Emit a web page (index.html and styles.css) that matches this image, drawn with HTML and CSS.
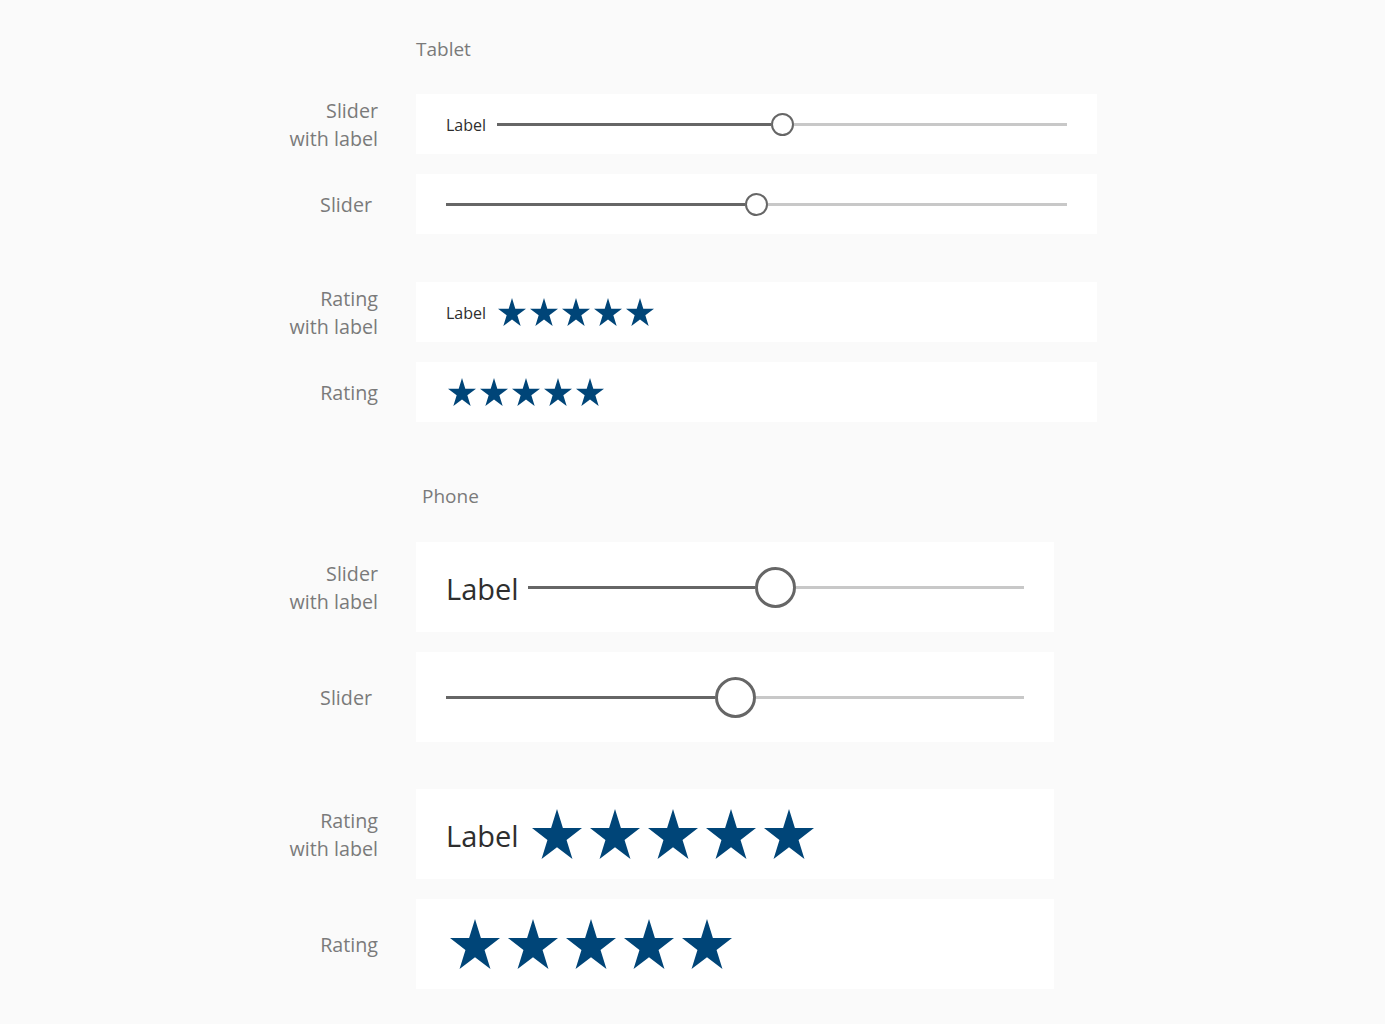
FILE: index.html
```html
<!DOCTYPE html>
<html lang="en">
<head>
<meta charset="utf-8">
<title>Slider and Rating</title>
<link rel="stylesheet" href="styles.css">
</head>
<body>
<svg width="0" height="0" class="defs" aria-hidden="true">
  <defs>
    <polygon id="star" points="50,0 61.8,38.2 100,38.2 69.1,61.8 80.9,100 50,76.4 19.1,100 30.9,61.8 0,38.2 38.2,38.2"/>
  </defs>
</svg>
<main class="page">
  <section class="section tablet">
    <h2 class="heading">Tablet</h2>
    <div class="cluster">
      <div class="row">
        <div class="row-label">Slider<br>with label</div>
        <div class="card">
          <span class="ctl-label">Label</span>
          <div class="slider">
            <span class="track filled"></span>
            <span class="thumb"></span>
            <span class="track empty"></span>
          </div>
        </div>
      </div>
      <div class="row">
        <div class="row-label shifted">Slider</div>
        <div class="card">
          <div class="slider">
            <span class="track filled"></span>
            <span class="thumb"></span>
            <span class="track empty"></span>
          </div>
        </div>
      </div>
    </div>
    <div class="cluster">
      <div class="row">
        <div class="row-label">Rating<br>with label</div>
        <div class="card">
          <span class="ctl-label">Label</span>
          <div class="stars">
            <svg class="star" viewBox="0 0 100 100"><use href="#star"/></svg>
            <svg class="star" viewBox="0 0 100 100"><use href="#star"/></svg>
            <svg class="star" viewBox="0 0 100 100"><use href="#star"/></svg>
            <svg class="star" viewBox="0 0 100 100"><use href="#star"/></svg>
            <svg class="star" viewBox="0 0 100 100"><use href="#star"/></svg>
          </div>
        </div>
      </div>
      <div class="row">
        <div class="row-label">Rating</div>
        <div class="card">
          <div class="stars">
            <svg class="star" viewBox="0 0 100 100"><use href="#star"/></svg>
            <svg class="star" viewBox="0 0 100 100"><use href="#star"/></svg>
            <svg class="star" viewBox="0 0 100 100"><use href="#star"/></svg>
            <svg class="star" viewBox="0 0 100 100"><use href="#star"/></svg>
            <svg class="star" viewBox="0 0 100 100"><use href="#star"/></svg>
          </div>
        </div>
      </div>
    </div>
  </section>

  <section class="section phone">
    <h2 class="heading">Phone</h2>
    <div class="cluster">
      <div class="row">
        <div class="row-label">Slider<br>with label</div>
        <div class="card">
          <span class="ctl-label">Label</span>
          <div class="slider">
            <span class="track filled"></span>
            <span class="thumb"></span>
            <span class="track empty"></span>
          </div>
        </div>
      </div>
      <div class="row">
        <div class="row-label shifted">Slider</div>
        <div class="card">
          <div class="slider">
            <span class="track filled"></span>
            <span class="thumb"></span>
            <span class="track empty"></span>
          </div>
        </div>
      </div>
    </div>
    <div class="cluster">
      <div class="row">
        <div class="row-label">Rating<br>with label</div>
        <div class="card">
          <span class="ctl-label">Label</span>
          <div class="stars">
            <svg class="star" viewBox="0 0 100 100"><use href="#star"/></svg>
            <svg class="star" viewBox="0 0 100 100"><use href="#star"/></svg>
            <svg class="star" viewBox="0 0 100 100"><use href="#star"/></svg>
            <svg class="star" viewBox="0 0 100 100"><use href="#star"/></svg>
            <svg class="star" viewBox="0 0 100 100"><use href="#star"/></svg>
          </div>
        </div>
      </div>
      <div class="row">
        <div class="row-label">Rating</div>
        <div class="card">
          <div class="stars">
            <svg class="star" viewBox="0 0 100 100"><use href="#star"/></svg>
            <svg class="star" viewBox="0 0 100 100"><use href="#star"/></svg>
            <svg class="star" viewBox="0 0 100 100"><use href="#star"/></svg>
            <svg class="star" viewBox="0 0 100 100"><use href="#star"/></svg>
            <svg class="star" viewBox="0 0 100 100"><use href="#star"/></svg>
          </div>
        </div>
      </div>
    </div>
  </section>
</main>
</body>
</html>
```

FILE: styles.css
```css
* { box-sizing: border-box; }

html, body {
  margin: 0;
  padding: 0;
  background: #fafafa;
}

body {
  font-family: "Open Sans", "Noto Sans", "Liberation Sans", sans-serif;
  color: #333;
}

.defs { position: absolute; width: 0; height: 0; overflow: hidden; }

.page {
  padding-top: 35px;
  display: flex;
  flex-direction: column;
}

.section {
  display: flex;
  flex-direction: column;
  gap: 48px;
}

.phone {
  margin-top: 61px;
  gap: 47px;
}

.heading {
  margin: 0 0 -17px 416px;
  font-size: 19px;
  font-weight: 400;
  line-height: 28px;
  color: #7a7a7a;
}

.phone .heading {
  margin-left: 422px;
  margin-top: -1px;
  margin-bottom: -15px;
}

.cluster {
  display: flex;
  flex-direction: column;
  gap: 20px;
}

.row {
  display: flex;
  align-items: center;
  gap: 38px;
}

.row-label {
  width: 378px;
  flex: none;
  text-align: right;
  font-size: 19.7px;
  line-height: 28px;
  padding-top: 2px;
  color: #7a7a7a;
}

.row-label.shifted {
  padding-right: 6px;
}

.card {
  background: #fff;
  display: flex;
  align-items: center;
  padding: 0 30px;
}

.tablet .card {
  width: 681px;
  height: 60px;
}

.phone .card {
  width: 638px;
  height: 90px;
}

.ctl-label {
  color: #2e2e2e;
  flex: none;
}

.tablet .ctl-label {
  font-size: 16px;
  margin-right: 10px;
  padding-top: 2px;
}

.phone .ctl-label {
  font-size: 29px;
  margin-right: 9px;
  padding-top: 2px;
}

.tablet .ctl-label + .slider { margin-left: 1px; }

.slider {
  flex: 1;
  display: flex;
  align-items: center;
}

.track {
  flex: 1;
  height: 3px;
}

.track.filled { background: #666; }
.track.empty { background: #c8c8c8; }

.thumb {
  flex: none;
  border-radius: 50%;
  background: #fff;
  border: 2px solid #666;
}

.tablet .thumb { width: 23px; height: 23px; }
.phone .thumb { width: 41px; height: 41px; border-width: 3px; }

.stars {
  display: flex;
  align-items: center;
}

.star {
  fill: #004578;
  display: block;
}

.tablet .star {
  width: 28px;
  height: 28px;
  margin: 0 2px;
}

.phone .star {
  width: 50px;
  height: 50px;
  margin: 0 4px;
}
```
